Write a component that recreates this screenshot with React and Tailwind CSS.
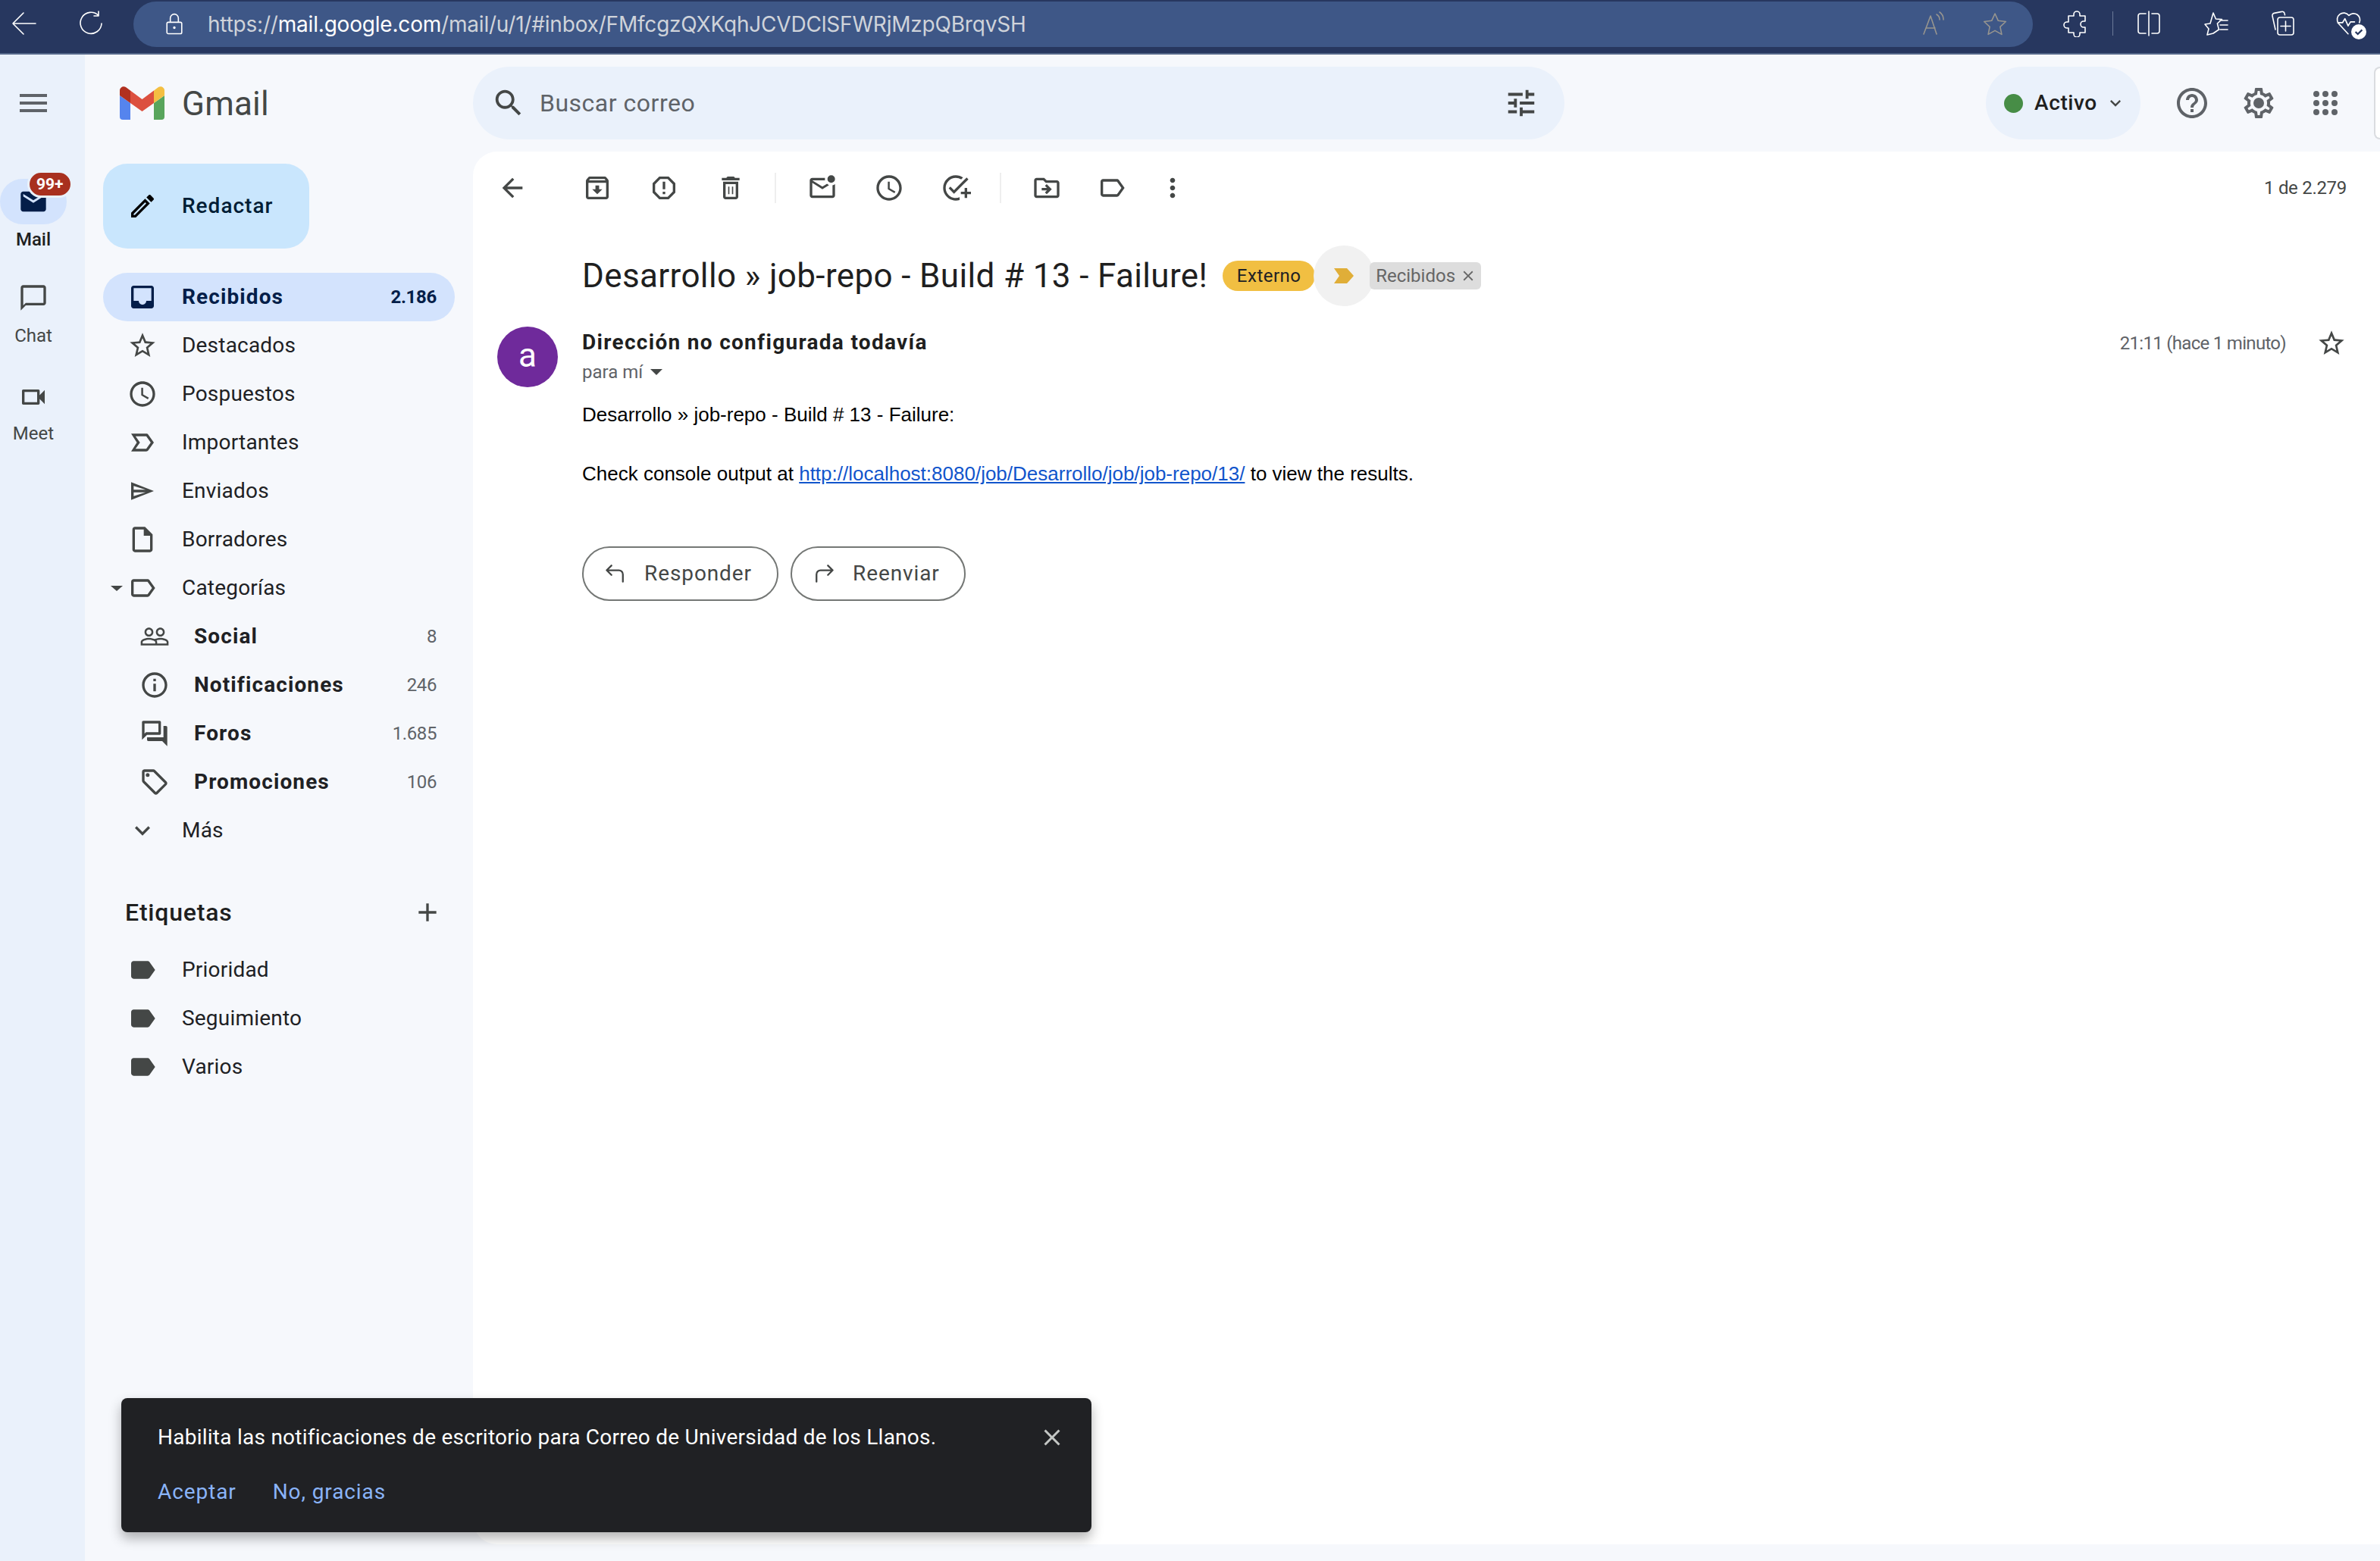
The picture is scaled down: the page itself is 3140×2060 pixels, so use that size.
import React from 'react';

const P = {
  menu: 'M3 18h18v-2H3v2zm0-5h18v-2H3v2zm0-7v2h18V6H3z',
  search: 'M15.5 14h-.79l-.28-.27C15.41 12.59 16 11.11 16 9.5 16 5.91 13.09 3 9.5 3S3 5.91 3 9.5 5.91 16 9.5 16c1.61 0 3.09-.59 4.23-1.57l.27.28v.79l5 4.99L20.49 19l-4.99-5zm-6 0C7.01 14 5 11.99 5 9.5S7.01 5 9.5 5 14 7.01 14 9.5 11.99 14 9.5 14z',
  tune: 'M3 17v2h6v-2H3zM3 5v2h10V5H3zm10 16v-2h8v-2h-8v-2h-2v6h2zM7 9v2H3v2h4v2h2V9H7zm14 4v-2H11v2h10zm-6-4h2V7h4V5h-4V3h-2v6z',
  help: 'M11 18h2v-2h-2v2zm1-16C6.48 2 2 6.48 2 12s4.48 10 10 10 10-4.48 10-10S17.52 2 12 2zm0 18c-4.41 0-8-3.59-8-8s3.59-8 8-8 8 3.59 8 8-3.59 8-8 8zm0-14c-2.21 0-4 1.79-4 4h2c0-1.1.9-2 2-2s2 .9 2 2c0 2-3 1.75-3 5h2c0-2.25 3-2.5 3-5 0-2.21-1.79-4-4-4z',
  gear: 'M19.43 12.98c.04-.32.07-.64.07-.98 0-.34-.03-.66-.07-.98l2.11-1.65c.19-.15.24-.42.12-.64l-2-3.46c-.09-.16-.26-.25-.44-.25-.06 0-.12.01-.17.03l-2.49 1c-.52-.4-1.08-.73-1.69-.98l-.38-2.65C14.46 2.18 14.25 2 14 2h-4c-.25 0-.46.18-.49.42l-.38 2.65c-.61.25-1.17.59-1.69.98l-2.49-1c-.06-.02-.12-.03-.18-.03-.17 0-.34.09-.43.25l-2 3.46c-.13.22-.07.49.12.64l2.11 1.65c-.04.32-.07.65-.07.98 0 .33.03.66.07.98l-2.11 1.65c-.19.15-.24.42-.12.64l2 3.46c.09.16.26.25.44.25.06 0 .12-.01.17-.03l2.49-1c.52.4 1.08.73 1.69.98l.38 2.65c.03.24.24.42.49.42h4c.25 0 .46-.18.49-.42l.38-2.65c.61-.25 1.17-.59 1.69-.98l2.49 1c.06.02.12.03.18.03.17 0 .34-.09.43-.25l2-3.46c.12-.22.07-.49-.12-.64l-2.11-1.65zm-1.98-1.71c.04.31.05.52.05.73 0 .21-.02.43-.05.73l-.14 1.13.89.7 1.08.84-.7 1.21-1.27-.51-1.04-.42-.9.68c-.43.32-.84.56-1.25.73l-1.06.43-.16 1.13-.2 1.35h-1.4l-.19-1.35-.16-1.13-1.06-.43c-.43-.18-.83-.41-1.23-.71l-.91-.7-1.06.43-1.27.51-.7-1.21 1.08-.84.89-.7-.14-1.13c-.03-.31-.05-.54-.05-.74s.02-.43.05-.73l.14-1.13-.89-.7-1.08-.84.7-1.21 1.27.51 1.04.42.9-.68c.43-.32.84-.56 1.25-.73l1.06-.43.16-1.13.2-1.35h1.39l.19 1.35.16 1.13 1.06.43c.43.18.83.41 1.23.71l.91.7 1.06-.43 1.27-.51.7 1.21-1.07.85-.89.7.14 1.13zM12 8.5a3.5 3.5 0 1 0 0 7 3.5 3.5 0 0 0 0-7z',
  apps: 'M6 4a2 2 0 1 0 0 4 2 2 0 0 0 0-4zm6 0a2 2 0 1 0 0 4 2 2 0 0 0 0-4zm6 0a2 2 0 1 0 0 4 2 2 0 0 0 0-4zM6 10a2 2 0 1 0 0 4 2 2 0 0 0 0-4zm6 0a2 2 0 1 0 0 4 2 2 0 0 0 0-4zm6 0a2 2 0 1 0 0 4 2 2 0 0 0 0-4zM6 16a2 2 0 1 0 0 4 2 2 0 0 0 0-4zm6 0a2 2 0 1 0 0 4 2 2 0 0 0 0-4zm6 0a2 2 0 1 0 0 4 2 2 0 0 0 0-4z',
  edit: 'M14.06 9.02l.92.92L5.92 19H5v-.92l9.06-9.06M17.66 3c-.25 0-.51.1-.7.29l-1.83 1.83 3.75 3.75 1.83-1.83c.39-.39.39-1.02 0-1.41l-2.34-2.34c-.2-.2-.45-.29-.71-.29zm-3.6 3.19L3 17.25V21h3.75L17.81 9.94l-3.75-3.75z',
  inbox: 'M19 3H5c-1.1 0-2 .9-2 2v14c0 1.1.9 2 2 2h14c1.1 0 2-.9 2-2V5c0-1.1-.9-2-2-2zm0 12h-4c0 1.66-1.35 3-3 3s-3-1.34-3-3H5V5h14v10z',
  star: 'M22 9.24l-7.19-.62L12 2 9.19 8.63 2 9.24l5.46 4.73L5.82 21 12 17.27 18.18 21l-1.63-7.03L22 9.24zM12 15.4l-3.76 2.27 1-4.28-3.32-2.88 4.38-.38L12 6.1l1.71 4.04 4.38.38-3.32 2.88 1 4.28L12 15.4z',
  clock: 'M11.99 2C6.47 2 2 6.48 2 12s4.47 10 9.99 10C17.52 22 22 17.52 22 12S17.52 2 11.99 2zM12 20c-4.42 0-8-3.58-8-8s3.58-8 8-8 8 3.58 8 8-3.58 8-8 8zm.5-13H11v6l5.25 3.15.75-1.23-4.5-2.67z',
  important: 'M15 19H3l4.5-7L3 5h12c.65 0 1.26.31 1.63.84L21 12l-4.37 6.16c-.37.52-.98.84-1.63.84zm-8.5-2H15l3.5-5-3.5-5H6.5l3.5 5-3.5 5z',
  send: 'M3 5v14l18-7L3 5zm2 3l9.500 3H5V8zm0 5h9.500L5 16v-3z',
  draft: 'M14 2H6c-1.1 0-2 .9-2 2v16c0 1.1.9 2 2 2h12c1.1 0 2-.9 2-2V8l-6-6zM6 20V4h7v5h5v11H6z',
  label: 'M17.63 5.84C17.27 5.33 16.67 5 16 5L5 5.01C3.9 5.01 3 5.9 3 7v10c0 1.1.9 1.99 2 1.99L16 19c.67 0 1.27-.33 1.63-.84L22 12l-4.37-6.16zM16 17H5V7h11l3.55 5L16 17z',
  labelFill: 'M17.63 5.84C17.27 5.33 16.67 5 16 5L5 5.01C3.9 5.01 3 5.9 3 7v10c0 1.1.9 1.99 2 1.99L16 19c.67 0 1.27-.33 1.63-.84L22 12l-4.37-6.16z',
  people: 'M16.5 13c-1.2 0-3.07.34-4.5 1-1.43-.67-3.3-1-4.5-1C5.33 13 1 14.08 1 16.25V19h22v-2.75c0-2.17-4.33-3.25-6.5-3.25zm-4 4.5h-10v-1.25c0-.54 2.56-1.75 5-1.75s5 1.21 5 1.75v1.25zm9 0H14v-1.25c0-.46-.2-.86-.52-1.22.88-.3 1.96-.53 3.02-.53 2.44 0 5 1.21 5 1.75v1.25zM7.5 12c1.93 0 3.5-1.57 3.5-3.5S9.43 5 7.5 5 4 6.57 4 8.5 5.57 12 7.5 12zm0-5.5c1.1 0 2 .9 2 2s-.9 2-2 2-2-.9-2-2 .9-2 2-2zm9 5.5c1.93 0 3.5-1.57 3.5-3.5S18.43 5 16.5 5 13 6.57 13 8.5s1.57 3.5 3.5 3.5zm0-5.5c1.1 0 2 .9 2 2s-.9 2-2 2-2-.9-2-2 .9-2 2-2z',
  info: 'M11 7h2v2h-2zm0 4h2v6h-2zm1-9C6.48 2 2 6.48 2 12s4.48 10 10 10 10-4.48 10-10S17.52 2 12 2zm0 18c-4.41 0-8-3.59-8-8s3.59-8 8-8 8 3.59 8 8-3.59 8-8 8z',
  forum: 'M15 4v7H5.17L4 12.17V4h11m1-2H3c-.55 0-1 .45-1 1v14l4-4h10c.55 0 1-.45 1-1V3c0-.55-.45-1-1-1zm5 4h-2v9H6v2c0 .55.45 1 1 1h11l4 4V7c0-.55-.45-1-1-1z',
  offer: 'M21.41 11.58l-9-9C12.05 2.22 11.55 2 11 2H4c-1.1 0-2 .9-2 2v7c0 .55.22 1.05.59 1.42l9 9c.36.36.86.58 1.41.58s1.05-.22 1.41-.59l7-7c.37-.36.59-.86.59-1.41s-.23-1.06-.59-1.42zM13 20.01L4 11V4h7v-.01l9 9-7 7.02zM6.5 5a1.5 1.5 0 1 0 0 3 1.5 1.5 0 0 0 0-3z',
  expand: 'M16.59 8.59L12 13.17 7.41 8.59 6 10l6 6 6-6z',
  add: 'M19 13h-6v6h-2v-6H5v-2h6V5h2v6h6v2z',
  back: 'M20 11H7.83l5.59-5.59L12 4l-8 8 8 8 1.41-1.41L7.83 13H20v-2z',
  archive: 'M20.54 5.23l-1.39-1.68C18.88 3.21 18.47 3 18 3H6c-.47 0-.88.21-1.16.55L3.46 5.23C3.17 5.57 3 6.02 3 6.5V19c0 1.1.9 2 2 2h14c1.1 0 2-.9 2-2V6.5c0-.48-.17-.93-.46-1.27zM6.24 5h11.52l.81.97H5.44l.8-.97zM5 19V8h14v11H5zm8.45-9h-2.9v3H8l4 4 4-4h-2.55z',
  report: 'M15.73 3H8.27L3 8.27v7.46L8.27 21h7.46L21 15.73V8.27L15.73 3zM19 14.9L14.9 19H9.1L5 14.9V9.1L9.1 5h5.8L19 9.1v5.8zM11 7h2v6h-2zm0 8h2v2h-2z',
  trash: 'M6 19c0 1.1.9 2 2 2h8c1.1 0 2-.9 2-2V7H6v12zM8 9h8v10H8V9zm7.5-5l-1-1h-5l-1 1H5v2h14V4h-3.5zM10 11h1v6h-1zm3 0h1v6h-1z',
  unread: 'M22 8.98V18c0 1.1-.9 2-2 2H4c-1.1 0-2-.9-2-2V6c0-1.1.9-2 2-2h10.1c-.06.32-.1.66-.1 1s.04.68.1 1H4l8 5 3.67-2.29c.47.43 1.02.76 1.63.98L12 13 4 8v10h16V9.9c.74-.15 1.42-.48 2-.92zM19 2a3 3 0 1 0 0 6 3 3 0 0 0 0-6z',
  task: 'M22 5.18L10.59 16.6l-4.24-4.24 1.41-1.41 2.83 2.83 10-10L22 5.18zM12 20c-4.42 0-8-3.58-8-8s3.58-8 8-8c1.58 0 3.04.46 4.28 1.25l1.44-1.44C16.1 2.67 14.13 2 12 2 6.48 2 2 6.48 2 12s4.48 10 10 10c1.06 0 2.08-.17 3-.47v-2.12c-.93.38-1.94.59-3 .59zM19 15h-3v2h3v3h2v-3h3v-2h-3v-3h-2v3z',
  move: 'M20 6h-8l-2-2H4c-1.1 0-1.99.9-1.99 2L2 18c0 1.1.9 2 2 2h16c1.1 0 2-.9 2-2V8c0-1.1-.9-2-2-2zm0 12H4V6h5.17l2 2H20v10zm-8.01-9l-1.41 1.41L12.16 12H8v2h4.16l-1.59 1.59L11.99 17 16 13.01 11.99 9z',
  dots: 'M12 8c1.1 0 2-.9 2-2s-.9-2-2-2-2 .9-2 2 .9 2 2 2zm0 2c-1.1 0-2 .9-2 2s.9 2 2 2 2-.9 2-2-.9-2-2-2zm0 6c-1.1 0-2 .9-2 2s.9 2 2 2 2-.9 2-2-.9-2-2-2z',
  close: 'M19 6.41L17.59 5 12 10.59 6.41 5 5 6.41 10.59 12 5 17.59 6.41 19 12 13.41 17.59 19 19 17.59 13.41 12z',
  chat: 'M20 2H4c-1.1 0-2 .9-2 2v18l4-4h14c1.1 0 2-.9 2-2V4c0-1.1-.9-2-2-2zm0 14H6l-2 2V4h16v12z',
  video: 'M15 8v8H5V8h10m1-2H4c-.55 0-1 .45-1 1v10c0 .55.45 1 1 1h12c.55 0 1-.45 1-1v-3.5l4 4v-11l-4 4V7c0-.55-.45-1-1-1z',
  mail: 'M20 4H4c-1.1 0-2 .9-2 2v12c0 1.1.9 2 2 2h16c1.1 0 2-.9 2-2V6c0-1.1-.9-2-2-2zm0 4l-8 5-8-5V6l8 5 8-5v2z',
};

function Icon({ d, className = 'w-10 h-10 text-[#444746]' }) {
  return (
    <svg viewBox="0 0 24 24" fill="currentColor" fillRule="evenodd" className={`shrink-0 ${className}`}>
      <path d={d} />
    </svg>
  );
}

// thin outlined glyphs of the Edge toolbar
function Line({ children, className = 'w-9 h-9 text-white', sw = 1.6 }) {
  return (
    <svg viewBox="0 0 36 36" fill="none" stroke="currentColor" strokeWidth={sw} strokeLinecap="round" strokeLinejoin="round" className={`shrink-0 ${className}`}>
      {children}
    </svg>
  );
}

function BrowserBar() {
  return (
    <div className="h-[72px] shrink-0 flex bg-[#27375f] border-b-2 border-[#55688a] font-['Inter',sans-serif]">
      <div className="w-[176px] flex items-center shrink-0 pl-[14px] pb-[8px]">
        <Line>
          <path d="M17 4 3 18l14 14M3 18h30" />
        </Line>
        <Line className="w-9 h-9 text-white ml-[52px]">
          <path d="M28 7.5A14 14 0 1 0 32 18M28 2v6h-6" />
        </Line>
      </div>
      <div className="w-[2506px] h-[60px] mt-[2px] rounded-full bg-[#3e5787] flex items-center pl-[38px] pr-[32px] shrink-0">
        <Line className="w-8 h-8 text-white" sw={1.8}>
          <path d="M9 15h18a2 2 0 0 1 2 2v13a2 2 0 0 1-2 2H9a2 2 0 0 1-2-2V17a2 2 0 0 1 2-2zM12 15V9a6 6 0 0 1 12 0v6" />
          <circle cx="18" cy="23" r="1" />
        </Line>
        <div className="ml-[28px] text-[28px] leading-none text-[#cfd3da] whitespace-nowrap tracking-[-0.2px]">
          https://<span className="text-white">mail.google.com</span>/mail/u/1/#inbox/FMfcgzQXKqhJCVDClSFWRjMzpQBrqvSH
        </div>
        <div className="ml-auto flex items-center gap-[44px] text-[#97958f]">
          <Line className="w-9 h-9">
            <path d="M4 31 13 7l8 24M7 23h12M21 5a8 8 0 0 1 4 7M25 2a12 12 0 0 1 5 10" />
          </Line>
          <Line className="w-9 h-9">
            <path d="m18 4 4.3 9.3 10 1.2-7.4 6.9 2 10L18 26.4 9.1 31.4l2-10-7.4-6.9 10-1.2z" />
          </Line>
        </div>
      </div>
      <div className="flex items-center pb-[8px] pl-[40px] text-white">
        <Line>
          <path d="M14 6a4 4 0 0 1 8 0v2h7v7h-2a3.5 3.5 0 0 0 0 8h2v7h-7v2a4 4 0 0 1-8 0v-2H7v-6H5a4 4 0 0 1 0-8h2V8h7z" />
        </Line>
        <div className="w-px h-[32px] bg-[#6c7a98] ml-[29px]" />
        <Line className="w-9 h-9 text-white ml-[29px]">
          <path d="M14 5H7a3 3 0 0 0-3 3v20a3 3 0 0 0 3 3h7M22 5h7a3 3 0 0 1 3 3v20a3 3 0 0 1-3 3h-7M18 2v32" />
        </Line>
        <Line className="w-9 h-9 text-white ml-[53px]">
          <path d="m14 4 3.4 8 8 .6-6 5.4 2 8L14 31 6 33l2-8-5-6 7-1zM23 14h10M23 20h10M23 26h10" />
        </Line>
        <Line className="w-9 h-9 text-white ml-[52px]">
          <path d="M8 26 4 8a3 3 0 0 1 2.4-3.6l10-2a3 3 0 0 1 3.6 2.3l.5 2M14 10h15a3 3 0 0 1 3 3v17a3 3 0 0 1-3 3H14a3 3 0 0 1-3-3V13a3 3 0 0 1 3-3zM21.500 15v13M15 21.500h13" />
        </Line>
        <div className="relative ml-[50px]">
          <Line className="w-[38px] h-[38px] text-white">
            <path d="M17 31 5 18a8 8 0 0 1 13-10 8 8 0 0 1 13 9M4 17h6l3-5 4 9 3-5h5" />
          </Line>
          <div className="absolute right-[-4px] bottom-[-2px] w-[20px] h-[20px] rounded-full bg-white flex items-center justify-center">
            <svg viewBox="0 0 16 16" className="w-[14px] h-[14px]" fill="none" stroke="#27375f" strokeWidth="2.5">
              <path d="m3 8 3.500 3.500L13 5" />
            </svg>
          </div>
        </div>
      </div>
    </div>
  );
}

function GmailLogo() {
  return (
    <svg viewBox="0 0 59 44" className="w-[59px] h-[44px] shrink-0">
      <path d="M0 12 14 22v22H4a4 4 0 0 1-4-4z" fill="#5584ee" />
      <path d="M45 22 59 12v28a4 4 0 0 1-4 4H45z" fill="#58a55c" />
      <path d="M45 5.500 51 1c3-2 8 0 8 4.500V12L45 22z" fill="#f4bf42" />
      <path d="M0 5.500C0 1 5-1 8 1l6 4.500V22L0 12z" fill="#b1301f" />
      <path d="M14 5.500 29.500 17 45 5.500V22L29.500 33 14 22z" fill="#dc503f" />
    </svg>
  );
}

function Header() {
  return (
    <div className="h-[128px] shrink-0 flex items-center">
      <div className="w-[512px] shrink-0 flex items-center pl-[46px] gap-[23px]">
        <GmailLogo />
        <span className="font-['Roboto',sans-serif] text-[44px] leading-none text-[#444746] tracking-[0.2px] pt-[2px]">Gmail</span>
      </div>
      <div className="w-[1440px] h-[96px] rounded-full bg-[#eaf1fb] flex items-center pl-[24px] pr-[34px] shrink-0">
        <Icon d={P.search} className="w-[46px] h-[46px] text-[#444746]" />
        <span className="ml-[18px] text-[32px] leading-none text-[#5f6368] tracking-[0.5px]">Buscar correo</span>
        <Icon d={P.tune} className="w-[46px] h-[46px] text-[#444746] ml-auto" />
      </div>
      <div className="ml-[556px] w-[204px] h-[96px] rounded-full bg-[#eaf1fb] flex items-center pl-[24px] shrink-0">
        <span className="w-[25px] h-[25px] rounded-full bg-[#478d46]" />
        <span className="ml-[15px] text-[28px] font-medium leading-none text-[#1f1f1f] tracking-[0.6px]">Activo</span>
        <Icon d={P.expand} className="w-[28px] h-[28px] text-[#444746] ml-[10px]" />
      </div>
      <div className="ml-[44px] flex items-center gap-[40px]">
        <Icon d={P.help} className="w-[48px] h-[48px] text-[#5f6368]" />
        <Icon d={P.gear} className="w-[48px] h-[48px] text-[#5f6368]" />
        <Icon d={P.apps} className="w-[48px] h-[48px] text-[#5f6368]" />
      </div>
      <div className="ml-[40px] flex-1 h-[96px] bg-white border-2 border-r-0 border-[#dadce0] rounded-l-[16px]" />
    </div>
  );
}

function Rail() {
  return (
    <div className="w-[112px] shrink-0 bg-[#eaf1fb] flex flex-col relative">
      <div className="h-[128px] flex items-center shrink-0 pl-[20px]">
        <Icon d={P.menu} className="w-12 h-12 text-[#5f6368]" />
      </div>
      <div className="w-[88px] flex flex-col items-center pt-[36px]">
        <div className="relative w-[88px] h-[60px] rounded-full bg-[#d3e3fd] flex items-center justify-center">
          <Icon d={P.mail} className="w-10 h-10 text-[#041e49]" />
          <div className="absolute left-[36px] top-[-11px] h-[30px] px-[9px] rounded-full bg-[#a8301f] border-[3px] border-[#eaf1fb] flex items-center box-content text-white text-[21px] font-bold leading-none">99+</div>
        </div>
        <span className="mt-[5px] text-[24px] font-medium leading-[30px] text-[#1f1f1f]">Mail</span>
        <Icon d={P.chat} className="w-10 h-10 text-[#444746] mt-[42px]" />
        <span className="mt-[15px] text-[24px] leading-[30px] text-[#444746]">Chat</span>
        <Icon d={P.video} className="w-10 h-10 text-[#444746] mt-[46px]" />
        <span className="mt-[13px] text-[24px] leading-[30px] text-[#444746]">Meet</span>
      </div>
    </div>
  );
}

function NavRow({ icon, label, count, active }) {
  return (
    <div className={`h-[64px] w-[464px] flex items-center pl-[32px] pr-[24px] rounded-full ${active ? 'bg-[#d3e3fd] text-[#041e49] font-bold' : 'text-[#202124]'}`}>
      <Icon d={icon} className={`w-10 h-10 ${active ? 'text-[#041e49]' : 'text-[#444746]'}`} />
      <span className={`ml-[32px] text-[28px] leading-none ${active ? 'tracking-[1.1px]' : 'tracking-[0.2px]'}`}>{label}</span>
      {count && <span className="ml-auto text-[24px] leading-none tracking-[-0.3px]">{count}</span>}
    </div>
  );
}

function SubRow({ icon, label, count }) {
  return (
    <div className="h-[64px] w-[464px] flex items-center pl-[48px] pr-[24px] text-[#202124]">
      <Icon d={icon} className="w-10 h-10 text-[#444746]" />
      <span className="ml-[32px] text-[28px] font-bold leading-none tracking-[1.1px]">{label}</span>
      <span className="ml-auto text-[24px] leading-none text-[#5f6368] tracking-[-0.4px]">{count}</span>
    </div>
  );
}

function Sidebar() {
  return (
    <div className="w-[512px] shrink-0 pl-[24px] pt-[16px]">
      <div className="w-[272px] h-[112px] rounded-[32px] bg-[#c9e6fd] flex items-center pl-[32px]">
        <Icon d={P.edit} className="w-10 h-10 text-black" />
        <span className="ml-[32px] text-[28px] font-medium leading-none text-[#001d35] tracking-[1px]">Redactar</span>
      </div>
      <div className="mt-[32px]">
        <NavRow icon={P.inbox} label="Recibidos" count="2.186" active />
        <NavRow icon={P.star} label="Destacados" />
        <NavRow icon={P.clock} label="Pospuestos" />
        <NavRow icon={P.important} label="Importantes" />
        <NavRow icon={P.send} label="Enviados" />
        <NavRow icon={P.draft} label="Borradores" />
        <div className="relative">
          <NavRow icon={P.label} label="Categorías" />
          <div className="absolute left-[10px] top-[29px] w-0 h-0 border-x-[8px] border-x-transparent border-t-[7px] border-t-[#444746]" />
        </div>
        <SubRow icon={P.people} label="Social" count="8" />
        <SubRow icon={P.info} label="Notificaciones" count="246" />
        <SubRow icon={P.forum} label="Foros" count="1.685" />
        <SubRow icon={P.offer} label="Promociones" count="106" />
        <NavRow icon={P.expand} label="Más" />
      </div>
      <div className="mt-[44px] w-[464px] h-[64px] flex items-center pl-[29px] pr-[16px]">
        <span className="text-[32px] font-medium leading-none text-[#1f1f1f] tracking-[0.8px]">Etiquetas</span>
        <Icon d={P.add} className="w-10 h-10 text-[#444746] ml-auto" />
      </div>
      <div className="mt-[12px]">
        <NavRow icon={P.labelFill} label="Prioridad" />
        <NavRow icon={P.labelFill} label="Seguimiento" />
        <NavRow icon={P.labelFill} label="Varios" />
      </div>
    </div>
  );
}

function Toolbar() {
  return (
    <div className="h-[96px] flex items-center pl-[32px] pr-[44px]">
      <Icon d={P.back} />
      <div className="ml-[72px] flex items-center gap-[48px]">
        <Icon d={P.archive} />
        <Icon d={P.report} />
        <Icon d={P.trash} />
      </div>
      <div className="w-[2px] h-[40px] bg-[#eeeeee] ml-[38px]" />
      <div className="ml-[41px] flex items-center gap-[48px]">
        <Icon d={P.unread} />
        <Icon d={P.clock} />
        <Icon d={P.task} />
      </div>
      <div className="w-[2px] h-[40px] bg-[#eeeeee] ml-[38px]" />
      <Icon d={P.move} className="w-10 h-10 text-[#444746] ml-[40px]" />
      <Icon d={P.label} className="w-10 h-10 text-[#444746] ml-[46px]" />
      <Icon d={P.dots} className="w-10 h-10 text-[#444746] ml-[40px]" />
      <span className="ml-auto text-[24px] leading-none text-[#444746] tracking-[-0.3px]">1 de 2.279</span>
    </div>
  );
}

function Main() {
  return (
    <div className="flex-1 mb-[22px] bg-white rounded-l-[32px]">
      <Toolbar />
      <div className="flex items-center h-[80px] mt-[28px] pl-[144px]">
        <span className="font-['Roboto',sans-serif] text-[44px] leading-none text-[#1f1f1f] whitespace-nowrap tracking-[0.36px]">Desarrollo » job-repo - Build # 13 - Failure!</span>
        <span className="ml-[20px] h-[40px] w-[122px] rounded-full bg-[#f1bf42] flex items-center justify-center text-[24px] leading-none text-[#202124] tracking-[0.5px]">Externo</span>
        <span className="w-[80px] h-[80px] -ml-[2px] rounded-full bg-[#f1f1f1] flex items-center justify-center shrink-0">
          <svg viewBox="0 0 26 20" className="w-[26px] h-[20px]">
            <path d="M0 0h17l9 10-9 10H0l7-10z" fill="#e0ae38" />
          </svg>
        </span>
        <span className="h-[36px] w-[147px] rounded-[6px] bg-[#dddddd] flex items-center pl-[8px] text-[24px] leading-none text-[#666666] -ml-[6px]">
          Recibidos
          <Icon d={P.close} className="w-[22px] h-[22px] text-[#666666] ml-[6px]" />
        </span>
      </div>
      <div className="flex mt-[27px] pl-[32px] pr-[44px]">
        <div className="w-[80px] h-[80px] rounded-full bg-[#6f2a9b] text-white flex items-center justify-center text-[44px] leading-none shrink-0 pb-[4px]">a</div>
        <div className="ml-[32px] pt-[7px]">
          <div className="text-[28px] font-bold leading-[28px] text-[#1f1f1f] tracking-[1.3px]">Dirección no configurada todavía</div>
          <div className="flex items-center mt-[13px] text-[24px] leading-[24px] text-[#5f6368]">
            para mí
            <svg viewBox="0 0 16 8" className="w-[16px] h-[8px] ml-[10px] text-[#444746]" fill="currentColor">
              <path d="M0 0h16L8 8z" />
            </svg>
          </div>
        </div>
        <div className="ml-auto flex items-start pt-[2px]">
          <span className="text-[24px] leading-[40px] text-[#5f6368] tracking-[-0.7px]">21:11 (hace 1 minuto)</span>
          <Icon d={P.star} className="w-10 h-10 text-[#444746] ml-[40px]" />
        </div>
      </div>
      <div className="pl-[144px] mt-[21px] font-['Liberation_Sans',sans-serif] text-[26px] leading-[30px] text-[#000000]">
        <div>Desarrollo » job-repo - Build # 13 - Failure:</div>
        <div className="mt-[48px]">
          Check console output at <span className="text-[#1155cc] underline">http://localhost:8080/job/Desarrollo/job/job-repo/13/</span> to view the results.
        </div>
      </div>
      <div className="flex gap-[16px] pl-[144px] mt-[81px]">
        <div className="w-[259px] h-[72px] rounded-full border-2 border-[#747775] flex items-center pl-[26px] text-[28px] leading-none text-[#444746] tracking-[0.9px]">
          <Line className="w-8 h-8 text-[#444746]" sw={2.600}>
            <path d="M12 6 5 13l7 7M5 13h18a6 6 0 0 1 6 6v11" />
          </Line>
          <span className="ml-[22px]">Responder</span>
        </div>
        <div className="w-[231px] h-[72px] rounded-full border-2 border-[#747775] flex items-center pl-[26px] text-[28px] leading-none text-[#444746] tracking-[0.9px]">
          <Line className="w-8 h-8 text-[#444746]" sw={2.600}>
            <path d="m24 6 7 7-7 7M31 13H13a6 6 0 0 0-6 6v11" />
          </Line>
          <span className="ml-[22px]">Reenviar</span>
        </div>
      </div>
    </div>
  );
}

function Toast() {
  return (
    <div className="absolute left-[160px] top-[1845px] w-[1280px] h-[177px] bg-[#202124] rounded-[8px] shadow-[0_8px_16px_rgba(0,0,0,0.3)] pl-[48px] pr-[34px] pt-[34px]">
      <div className="flex items-center h-[36px] justify-between">
        <span className="text-[28px] leading-none text-white tracking-[0.25px]">Habilita las notificaciones de escritorio para Correo de Universidad de los Llanos.</span>
        <Icon d={P.close} className="w-[36px] h-[36px] text-[#c4c7c5]" />
      </div>
      <div className="flex gap-[48px] mt-[40px] text-[28px] leading-none text-[#8ab4f8] tracking-[0.9px]">
        <span>Aceptar</span>
        <span>No, gracias</span>
      </div>
    </div>
  );
}

export default function App() {
  return (
    <div className="relative w-[3140px] h-[2060px] overflow-hidden flex flex-col bg-[#f6f8fc] font-['Roboto',sans-serif]">
      <BrowserBar />
      <div className="flex flex-1 min-h-0">
        <Rail />
        <div className="flex-1 min-w-0 flex flex-col">
          <Header />
          <div className="flex flex-1 min-h-0">
            <Sidebar />
            <Main />
          </div>
        </div>
      </div>
      <Toast />
    </div>
  );
}
